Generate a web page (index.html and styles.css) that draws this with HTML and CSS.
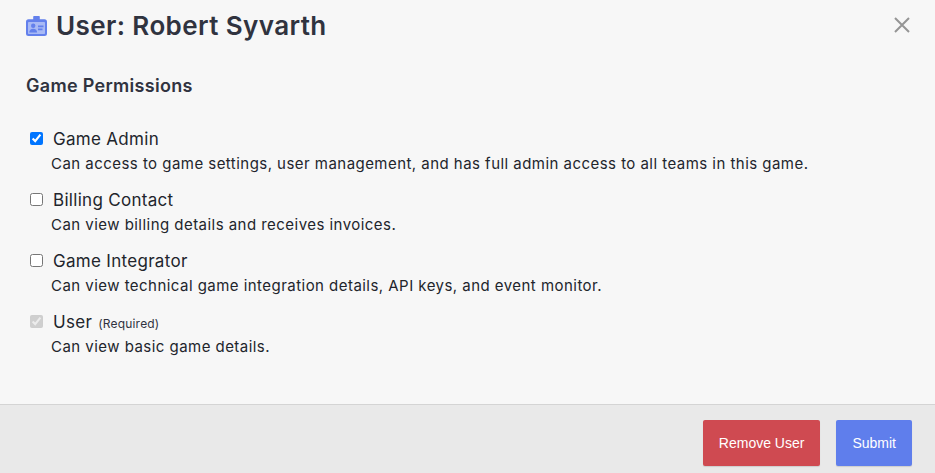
FILE: index.html
```html
<!DOCTYPE html>
<html lang="en">
<head>
<meta charset="utf-8">
<title>User: Robert Syvarth</title>
<link rel="stylesheet" href="styles.css">
</head>
<body>
<div class="modal">
  <header class="modal-header">
    <h1 class="modal-title">
      <svg class="title-icon" viewBox="0 0 21 20" width="21" height="20" aria-hidden="true">
        <path fill="#6380ec" d="M8 0h5a.8.8 0 0 1 .8.8V3.200h4.700A2.500 2.500 0 0 1 21 5.700V17.500a2.500 2.500 0 0 1-2.500 2.500h-16A2.500 2.500 0 0 1 0 17.500V5.700A2.500 2.500 0 0 1 2.500 3.200h4.700V.8a.8.8 0 0 1 .8-.8z"/>
        <rect fill="#a9baf5" x="2" y="6" width="17" height="12" rx=".8"/>
        <circle fill="#6380ec" cx="7.200" cy="9.800" r="2.200"/>
        <path fill="#6380ec" d="M3.300 16.600c0-2.500 1.600-3.800 3.900-3.800s3.900 1.300 3.900 3.800z"/>
        <path fill="#6380ec" d="M12 9.500h5.500v1.700H12zM12 12.500h4.500v1.700H12z"/>
      </svg>
      <span>User: Robert Syvarth</span>
    </h1>
    <button class="close" type="button" aria-label="Close">
      <svg viewBox="0 0 16 16" width="16" height="16" aria-hidden="true"><path d="M1 1l14 14M15 1L1 15" stroke="#959595" stroke-width="2" fill="none"/></svg>
    </button>
  </header>
  <main class="modal-body">
    <h2 class="section-title">Game Permissions</h2>
    <div class="perms">
      <div class="perm">
        <label class="perm-label"><input type="checkbox" checked> <span>Game Admin</span></label>
        <p class="perm-desc">Can access to game settings, user management, and has full admin access to all teams in this game.</p>
      </div>
      <div class="perm">
        <label class="perm-label"><input type="checkbox"> <span>Billing Contact</span></label>
        <p class="perm-desc">Can view billing details and receives invoices.</p>
      </div>
      <div class="perm">
        <label class="perm-label"><input type="checkbox"> <span>Game Integrator</span></label>
        <p class="perm-desc">Can view technical game integration details, API keys, and event monitor.</p>
      </div>
      <div class="perm">
        <label class="perm-label"><input type="checkbox" checked disabled> <span>User</span> <small class="required">(Required)</small></label>
        <p class="perm-desc">Can view basic game details.</p>
      </div>
    </div>
  </main>
  <footer class="modal-footer">
    <button class="btn btn-danger" type="button">Remove User</button>
    <button class="btn btn-primary" type="button">Submit</button>
  </footer>
</div>
</body>
</html>
```

FILE: styles.css
```css
* { box-sizing: border-box; }
html, body { margin: 0; height: 100%; overflow: hidden; }
body {
  background: #f7f7f7;
  color: #22252c;
  font-family: Inter, "Liberation Sans", sans-serif;
}
.modal { display: flex; flex-direction: column; height: 473px; }
.modal-header {
  display: flex;
  align-items: center;
  justify-content: space-between;
  padding: 0 25px 0 26px;
  height: 51px;
}
.modal-title {
  display: flex;
  align-items: center;
  gap: 9px;
  margin: 0;
  color: #30333f;
  font-size: 26px;
  font-weight: 600;
  letter-spacing: .4px;
  line-height: 32px;
}
.title-icon { display: block; }
.close { display: block; margin-bottom: 2px; padding: 0; border: 0; background: none; }
.close svg { display: block; }
.modal-body { flex: 1; padding: 24px 26px 0; }
.section-title {
  margin: 0;
  color: #30333f;
  font-size: 18px;
  font-weight: 600;
  letter-spacing: .3px;
  line-height: 22px;
}
.perms { display: flex; flex-direction: column; gap: 10px; margin-top: 29px; }
.perm { height: 51px; }
.perm-label {
  display: flex;
  align-items: center;
  height: 26px;
  font-size: 17px;
  letter-spacing: .3px;
  padding-left: 4px;
}
.perm-label input { width: 13px; height: 13px; margin: 0 10px 2px 0; }
.required { margin: 2px 0 0 6px; font-size: 12px; letter-spacing: .2px; color: #30333f; }
.perm-desc { margin: 0 0 0 25px; font-size: 15px; letter-spacing: .46px; line-height: 24px; }
.modal-footer {
  display: flex;
  justify-content: flex-end;
  gap: 16px;
  height: 69px;
  padding: 15px 23px 0 0;
  background: #e9e9e9;
  border-top: 1px solid #d4d4d4;
}
.btn {
  height: 46px;
  border: 0;
  border-radius: 2px;
  color: #fff;
  font-family: "Liberation Sans", Arial, sans-serif;
  font-size: 14px;
  padding: 0 16px;
  box-shadow: 0 1px 1px rgba(0,0,0,.12);
}
.btn-danger { background: #cf4a51; }
.btn-primary { background: #5f7eec; }
```
